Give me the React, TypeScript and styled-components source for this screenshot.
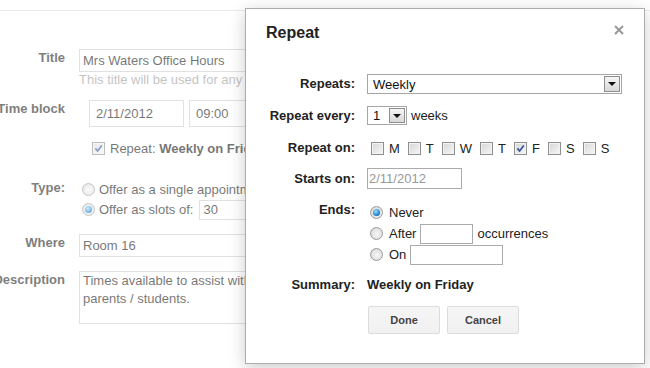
import React from 'react';
import styled, { createGlobalStyle } from 'styled-components';

const GlobalStyle = createGlobalStyle`
  html, body {
    margin: 0;
    padding: 0;
  }
  body {
    font-family: 'Liberation Sans', Arial, sans-serif;
    font-size: 13px;
    color: #222;
    background: #fff;
  }
`;

const Screen = styled.div`
  position: relative;
  width: 650px;
  height: 368px;
  overflow: hidden;
  background: #fff;
`;

/* ---------- page behind the dialog ---------- */

const Page = styled.div`
  margin-top: 10px;
  border-top: 1px solid #ddd;
  padding-top: 38px;
`;

const Field = styled.div<{ $gap?: number }>`
  display: grid;
  grid-template-columns: 65px 480px;
  column-gap: 14px;
  margin-top: ${(p) => p.$gap ?? 0}px;
`;

const FieldLabel = styled.div`
  display: flex;
  justify-content: flex-end;
  white-space: nowrap;
  font-weight: bold;
  line-height: 18px;
  color: #222;
`;

const FieldBody = styled.div<{ $indent?: number }>`
  display: flex;
  flex-direction: column;
  padding-left: ${(p) => p.$indent ?? 0}px;
`;

const PageInput = styled.input<{ $width: number; $height: number }>`
  box-sizing: border-box;
  width: ${(p) => p.$width}px;
  height: ${(p) => p.$height}px;
  border: 1px solid #ccc;
  padding: 0 3px;
  font: 13px 'Liberation Sans', Arial, sans-serif;
  color: #111;
  background: #fff;
  outline: none;
`;

const Hint = styled.div`
  line-height: 15px;
  color: #999;
  white-space: nowrap;
`;

const InlineRow = styled.div<{ $gap?: number; $top?: number; $height?: number }>`
  display: flex;
  align-items: center;
  gap: ${(p) => p.$gap ?? 5}px;
  margin-top: ${(p) => p.$top ?? 0}px;
  height: ${(p) => (p.$height ? `${p.$height}px` : 'auto')};
  white-space: nowrap;
  color: #111;
`;

const DescriptionBox = styled.textarea`
  box-sizing: border-box;
  width: 480px;
  height: 53px;
  border: 1px solid #ccc;
  padding: 0 3px;
  font: 13px/18px 'Liberation Sans', Arial, sans-serif;
  color: #111;
  resize: none;
  overflow: hidden;
  white-space: pre;
  outline: none;
`;

const Veil = styled.div`
  position: absolute;
  inset: 0;
  background: rgba(255, 255, 255, 0.42);
`;

/* ---------- drawn form controls ---------- */

const CheckBoxMark = styled.span`
  box-sizing: border-box;
  display: inline-flex;
  align-items: center;
  justify-content: center;
  flex: none;
  width: 13px;
  height: 13px;
  border: 1px solid #8f8f8f;
  background: linear-gradient(135deg, #d6d6d6 0%, #f7f7f7 100%);
  box-shadow: inset 0 0 0 1px #f2f2f2;
`;

function CheckBox({ checked }: { checked?: boolean }) {
  return (
    <CheckBoxMark>
      {checked && (
        <svg width='9' height='9' viewBox='0 0 9 9'>
          <path
            d='M1.4 4.4 L3.6 7 L7.8 1.4'
            fill='none'
            stroke='#34539d'
            strokeWidth='1.7'
          />
        </svg>
      )}
    </CheckBoxMark>
  );
}

const RadioMark = styled.span<{ $on?: boolean }>`
  box-sizing: border-box;
  display: inline-flex;
  align-items: center;
  justify-content: center;
  flex: none;
  width: 13px;
  height: 13px;
  border-radius: 50%;
  border: 1px solid #9c9c9c;
  background: radial-gradient(circle at 55% 55%, #f6f6f6 0%, #e4e4e4 55%, #c9c9c9 100%);
  &::after {
    content: '';
    width: 7px;
    height: 7px;
    border-radius: 50%;
    background: ${(p) =>
      p.$on
        ? 'radial-gradient(circle at 40% 35%, #a6e4ff 0%, #2a8ad6 55%, #0d4f8f 100%)'
        : 'transparent'};
  }
`;

const SelectBox = styled.div<{ $width: number; $height: number }>`
  box-sizing: border-box;
  display: flex;
  align-items: center;
  justify-content: space-between;
  width: ${(p) => p.$width}px;
  height: ${(p) => p.$height}px;
  border: 1px solid #a5a5a5;
  background: #fff;
  padding: 0 1px 0 5px;
  color: #111;
`;

const SelectArrow = styled.span`
  box-sizing: border-box;
  display: flex;
  align-items: center;
  justify-content: center;
  width: 16px;
  height: calc(100% - 2px);
  border: 1px solid #8e8e8e;
  background: linear-gradient(#f6f6f6, #d8d8d8);
  &::after {
    content: '';
    border-left: 4px solid transparent;
    border-right: 4px solid transparent;
    border-top: 4px solid #111;
  }
`;

/* ---------- dialog ---------- */

const Dialog = styled.div`
  position: absolute;
  left: 245px;
  top: 8px;
  box-sizing: border-box;
  width: 400px;
  height: 356px;
  border: 1px solid #acacac;
  background: #fff;
  box-shadow: 0 4px 16px rgba(0, 0, 0, 0.2);
`;

const DialogHeader = styled.div`
  padding: 14px 0 0 20px;
`;

const DialogTitle = styled.div`
  font-size: 16px;
  line-height: 19px;
  font-weight: bold;
  color: #222;
`;

const CloseButton = styled.span`
  position: absolute;
  top: 16px;
  right: 20px;
  display: flex;
`;

const DialogBody = styled.div`
  margin-top: 32px;
`;

const Row = styled.div<{ $gap?: number }>`
  display: grid;
  grid-template-columns: 109px 1fr;
  column-gap: 12px;
  align-items: center;
  margin-top: ${(p) => p.$gap ?? 0}px;
`;

const RowLabel = styled.div<{ $top?: boolean }>`
  align-self: ${(p) => (p.$top ? 'start' : 'center')};
  text-align: right;
  font-weight: bold;
  line-height: 16px;
  color: #222;
  white-space: nowrap;
`;

const RowContent = styled.div<{ $gap?: number }>`
  display: flex;
  align-items: center;
  gap: ${(p) => p.$gap ?? 5}px;
  color: #222;
  white-space: nowrap;
`;

const DayList = styled.div`
  display: flex;
  align-items: center;
  gap: 8px;
  padding-left: 4px;
  height: 16px;
`;

const DayItem = styled.label`
  display: flex;
  align-items: center;
  gap: 5px;
`;

const TextBox = styled.input<{ $width: number; $muted?: boolean }>`
  box-sizing: border-box;
  width: ${(p) => p.$width}px;
  height: ${(p) => (p.$muted ? 21 : 20)}px;
  border: 1px solid #ababab;
  padding: 0 1px;
  font: 13px 'Liberation Sans', Arial, sans-serif;
  color: ${(p) => (p.$muted ? '#999' : '#222')};
  background: #fff;
  outline: none;
`;

const EndsList = styled.div`
  display: flex;
  flex-direction: column;
  padding-left: 3px;
`;

const EndsOption = styled.label`
  display: flex;
  align-items: center;
  gap: 4px;
  height: 21px;
  & > span:first-child {
    margin-right: 2px;
  }
`;

const Summary = styled.div`
  font-weight: bold;
  line-height: 16px;
  color: #222;
`;

const ButtonBar = styled.div`
  display: flex;
  gap: 7px;
  padding-left: 1px;
`;

const ActionButton = styled.button`
  box-sizing: border-box;
  width: 72px;
  height: 28px;
  padding: 0;
  border: 1px solid #dcdcdc;
  border-radius: 2px;
  background: linear-gradient(#f5f5f5, #f1f1f1);
  font: bold 11px 'Liberation Sans', Arial, sans-serif;
  color: #444;
`;

const days = ['M', 'T', 'W', 'T', 'F', 'S', 'S'];

export default function App() {
  return (
    <Screen>
      <GlobalStyle />
      <Page>
        <Field>
          <FieldLabel>Title</FieldLabel>
          <FieldBody>
            <PageInput $width={420} $height={23} defaultValue='Mrs Waters Office Hours' readOnly />
            <Hint>This title will be used for any appointments that are booked</Hint>
          </FieldBody>
        </Field>
        <Field $gap={13}>
          <FieldLabel>Time block</FieldLabel>
          <FieldBody $indent={10}>
            <InlineRow $gap={5}>
              <PageInput $width={95} $height={27} defaultValue='2/11/2012' readOnly style={{ paddingLeft: 6 }} />
              <PageInput $width={70} $height={27} defaultValue='09:00' readOnly style={{ paddingLeft: 6 }} />
            </InlineRow>
            <InlineRow $top={12} $height={18} style={{ paddingLeft: 3 }}>
              <CheckBox checked />
              <span>
                Repeat: <b>Weekly on Friday</b>
              </span>
            </InlineRow>
          </FieldBody>
        </Field>
        <Field $gap={22}>
          <FieldLabel>Type:</FieldLabel>
          <FieldBody $indent={3}>
            <InlineRow $height={20} $gap={4}>
              <RadioMark />
              <span>Offer as a single appointment</span>
            </InlineRow>
            <InlineRow $height={21} $gap={4}>
              <RadioMark $on />
              <span>Offer as slots of:</span>
              <PageInput $width={60} $height={20} defaultValue='30' readOnly style={{ marginLeft: 2 }} />
              <span>minutes</span>
            </InlineRow>
          </FieldBody>
        </Field>
        <Field $gap={14}>
          <FieldLabel>Where</FieldLabel>
          <FieldBody>
            <PageInput $width={420} $height={23} defaultValue='Room 16' readOnly />
          </FieldBody>
        </Field>
        <Field $gap={14}>
          <FieldLabel>Description</FieldLabel>
          <FieldBody>
            <DescriptionBox
              readOnly
              defaultValue={'Times available to assist with any questions from\nparents / students.'}
            />
          </FieldBody>
        </Field>
      </Page>
      <Veil />

      <Dialog>
        <DialogHeader>
          <DialogTitle>Repeat</DialogTitle>
        </DialogHeader>
        <CloseButton>
          <svg width='10' height='10' viewBox='0 0 10 10'>
            <path d='M1 1 L9 9 M9 1 L1 9' stroke='#999' strokeWidth='2' />
          </svg>
        </CloseButton>
        <DialogBody>
          <Row>
            <RowLabel>Repeats:</RowLabel>
            <RowContent>
              <SelectBox $width={255} $height={20}>
                <span>Weekly</span>
                <SelectArrow />
              </SelectBox>
            </RowContent>
          </Row>
          <Row $gap={12}>
            <RowLabel>Repeat every:</RowLabel>
            <RowContent $gap={4}>
              <SelectBox $width={40} $height={19}>
                <span>1</span>
                <SelectArrow />
              </SelectBox>
              <span>weeks</span>
            </RowContent>
          </Row>
          <Row $gap={15}>
            <RowLabel>Repeat on:</RowLabel>
            <DayList>
              {days.map((d, i) => (
                <DayItem key={i}>
                  <CheckBox checked={i === 4} />
                  <span>{d}</span>
                </DayItem>
              ))}
            </DayList>
          </Row>
          <Row $gap={12}>
            <RowLabel>Starts on:</RowLabel>
            <RowContent>
              <TextBox $width={95} $muted defaultValue='2/11/2012' readOnly />
            </RowContent>
          </Row>
          <Row $gap={13}>
            <RowLabel $top>Ends:</RowLabel>
            <EndsList>
              <EndsOption>
                <RadioMark $on />
                <span>Never</span>
              </EndsOption>
              <EndsOption>
                <RadioMark />
                <span>After</span>
                <TextBox $width={53} readOnly />
                <span>occurrences</span>
              </EndsOption>
              <EndsOption>
                <RadioMark />
                <span>On</span>
                <TextBox $width={93} readOnly />
              </EndsOption>
            </EndsList>
          </Row>
          <Row $gap={12}>
            <RowLabel>Summary:</RowLabel>
            <Summary>Weekly on Friday</Summary>
          </Row>
          <Row $gap={13}>
            <span />
            <ButtonBar>
              <ActionButton>Done</ActionButton>
              <ActionButton>Cancel</ActionButton>
            </ButtonBar>
          </Row>
        </DialogBody>
      </Dialog>
    </Screen>
  );
}
